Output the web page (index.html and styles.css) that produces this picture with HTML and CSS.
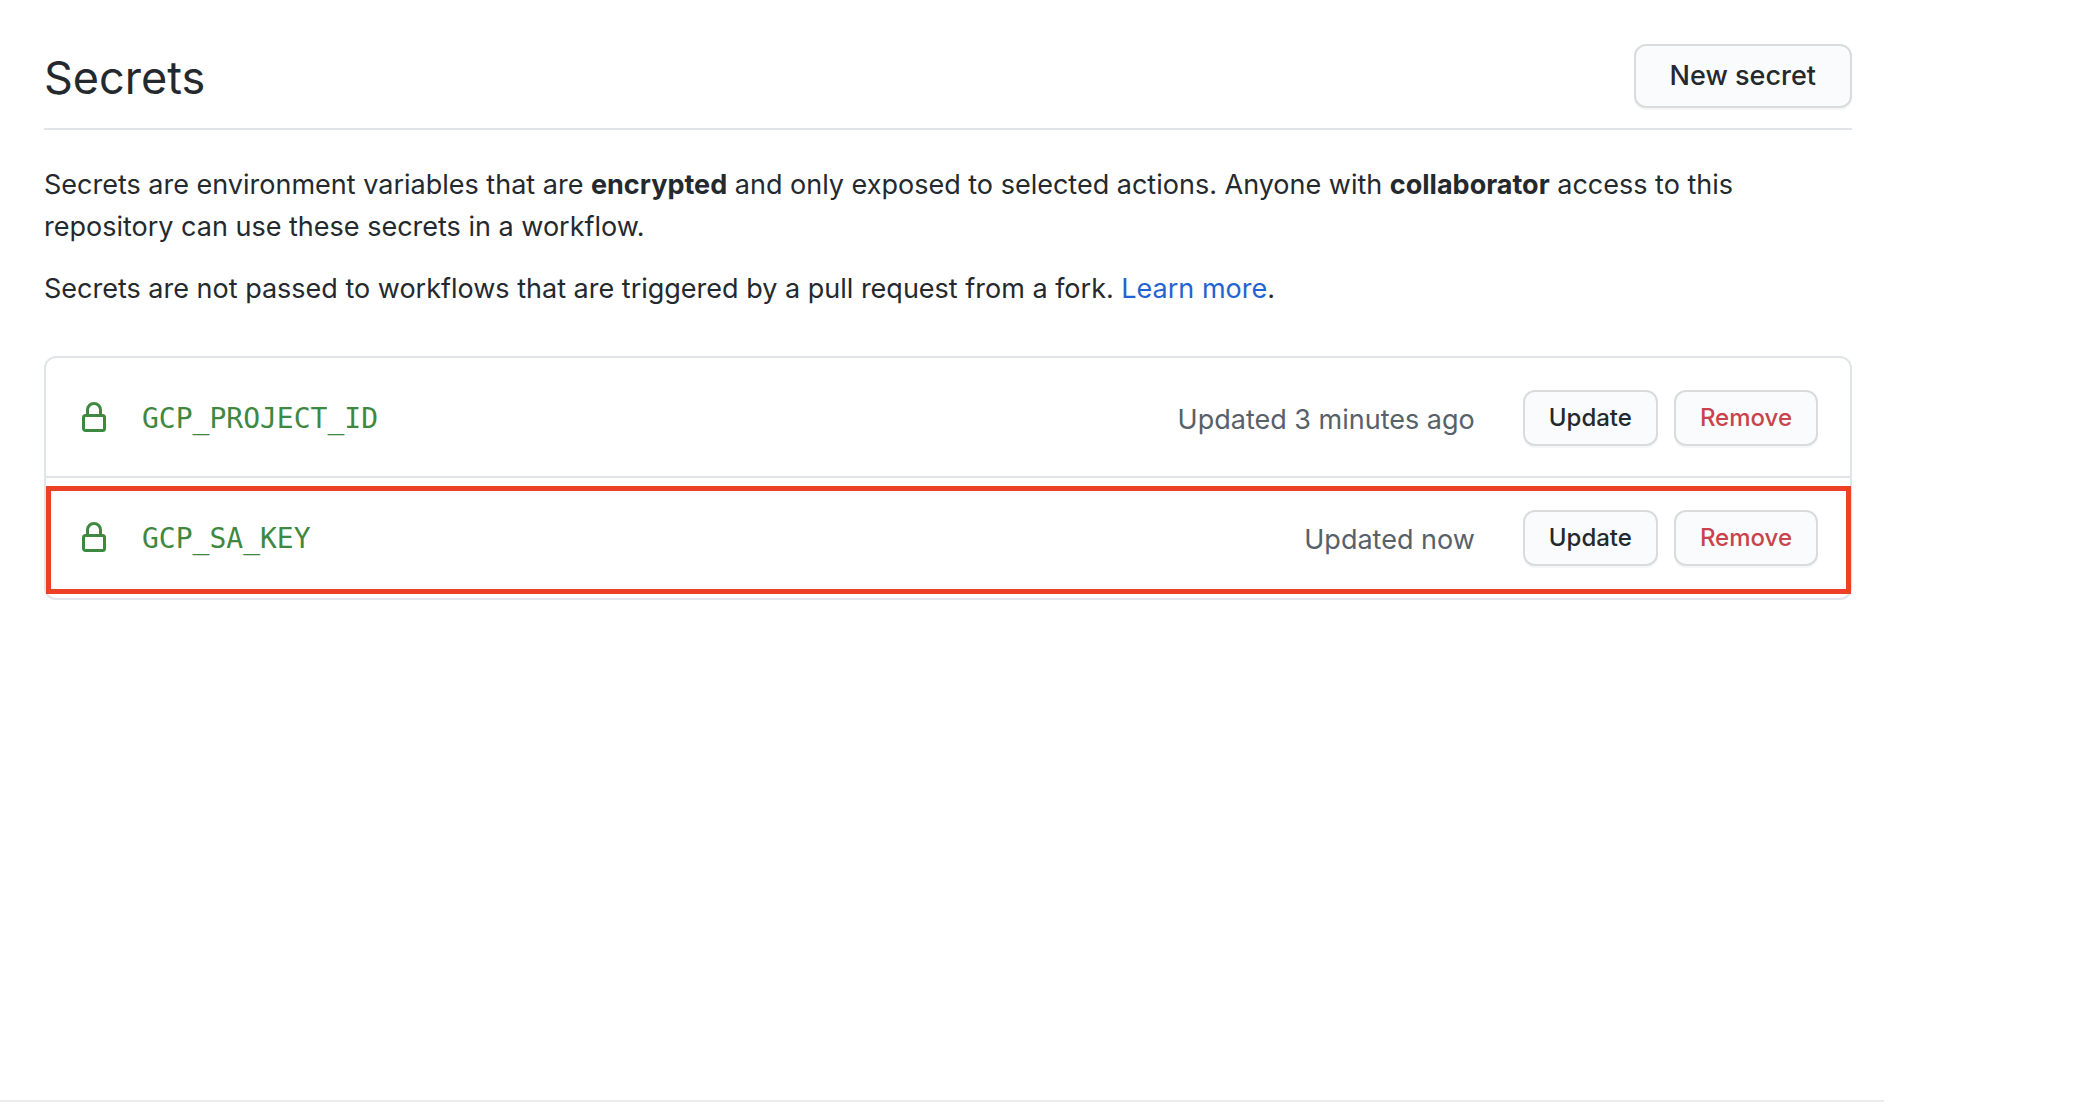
FILE: index.html
```html
<!DOCTYPE html>
<html lang="en">
<head>
<meta charset="utf-8">
<meta name="viewport" content="width=device-width, initial-scale=1">
<title>Secrets</title>
<link rel="stylesheet" href="styles.css">
</head>
<body>
<main class="page">
  <header class="subhead">
    <h1 class="subhead-title">Secrets</h1>
    <button type="button" class="btn">New secret</button>
  </header>
  <p class="note">Secrets are environment variables that are <strong>encrypted</strong> and only exposed to selected actions. Anyone with <strong>collaborator</strong> access to this repository can use these secrets in a workflow.</p>
  <p class="note">Secrets are not passed to workflows that are triggered by a pull request from a fork. <a class="link" href="#">Learn more</a>.</p>
  <ul class="box">
    <li class="row">
      <svg class="lock" viewBox="0 0 16 16" aria-hidden="true"><path fill-rule="evenodd" d="M4 4v2h-.25A1.75 1.75 0 002 7.750v5.500c0 .966.784 1.750 1.750 1.750h8.500A1.750 1.750 0 0014 13.250v-5.500A1.750 1.750 0 0012.250 6H12V4a4 4 0 10-8 0zm6.500 2V4a2.500 2.500 0 00-5 0v2h5zM3.750 7.500a.25.25 0 00-.25.25v5.500c0 .138.112.25.25.25h8.500a.25.25 0 00.25-.25v-5.500a.25.25 0 00-.25-.25h-8.500z"/></svg>
      <code class="name">GCP_PROJECT_ID</code>
      <span class="updated">Updated 3 minutes ago</span>
      <div class="actions">
        <button type="button" class="btn btn-sm">Update</button>
        <button type="button" class="btn btn-sm btn-danger">Remove</button>
      </div>
    </li>
    <li class="row row-marked">
      <svg class="lock" viewBox="0 0 16 16" aria-hidden="true"><path fill-rule="evenodd" d="M4 4v2h-.25A1.75 1.75 0 002 7.750v5.500c0 .966.784 1.750 1.750 1.750h8.500A1.750 1.750 0 0014 13.250v-5.500A1.750 1.750 0 0012.250 6H12V4a4 4 0 10-8 0zm6.500 2V4a2.500 2.500 0 00-5 0v2h5zM3.750 7.500a.25.25 0 00-.25.25v5.500c0 .138.112.25.25.25h8.500a.25.25 0 00.25-.25v-5.500a.25.25 0 00-.25-.25h-8.500z"/></svg>
      <code class="name">GCP_SA_KEY</code>
      <span class="updated">Updated now</span>
      <div class="actions">
        <button type="button" class="btn btn-sm">Update</button>
        <button type="button" class="btn btn-sm btn-danger">Remove</button>
      </div>
    </li>
  </ul>
</main>
<footer class="footer"></footer>
</body>
</html>
```
FILE: styles.css
```css
* {
  box-sizing: border-box;
}

body {
  display: flex;
  flex-direction: column;
  min-height: 100vh;
  margin: 0;
  padding: 44px 194px 12px 0;
  background: #fff;
  color: #24292e;
  font: 27px/42px Inter, "Liberation Sans", sans-serif;
}

.page {
  flex: 1;
  padding: 0 32px 0 44px;
}

.subhead {
  display: flex;
  align-items: center;
  justify-content: space-between;
  margin-bottom: 34px;
  padding-bottom: 20px;
  border-bottom: 2px solid #e1e4e8;
}

.subhead-title {
  margin: 0;
  padding-top: 4px;
  font-size: 45px;
  font-weight: 400;
  line-height: 60px;
}

.note {
  margin: 0 0 20px;
}

.link {
  color: #1f64d2;
  text-decoration: none;
}

.btn {
  padding: 8px 34px;
  border: 2px solid #d9dbdc;
  border-radius: 12px;
  background: #fafbfc;
  box-shadow: 0 2px 0 rgba(27, 31, 35, 0.04);
  color: #24292e;
  font: 500 27px/44px Inter, "Liberation Sans", sans-serif;
  white-space: nowrap;
}

.btn-sm {
  padding: 6px 24px;
  font-size: 24px;
  line-height: 40px;
}

.btn-danger {
  color: #c8434d;
}

.box {
  margin: 46px 0 0;
  padding: 0;
  border: 2px solid #e1e4e8;
  border-radius: 12px;
  list-style: none;
}

.row {
  position: relative;
  display: flex;
  align-items: center;
  padding: 32px 32px 30px;
  border-bottom: 2px solid #e1e4e8;
}

.row:last-child {
  border-bottom-color: transparent;
}

/* Red frame laid over the row that has just changed */
.row-marked::after {
  content: "";
  position: absolute;
  inset: 8px -1px 2px 0;
  border: 5px solid #ec4127;
  pointer-events: none;
}

.lock {
  flex: none;
  width: 32px;
  height: 32px;
  margin-right: 32px;
  fill: #3f883f;
}

.name {
  flex: 1;
  padding-top: 2px;
  color: #3f883f;
  font: 28px/42px "DejaVu Sans Mono", monospace;
}

.updated {
  margin-right: 48px;
  padding-top: 4px;
  color: #586069;
}

.actions {
  display: flex;
  gap: 16px;
}

.footer {
  border-top: 2px solid #eaecef;
}
```
